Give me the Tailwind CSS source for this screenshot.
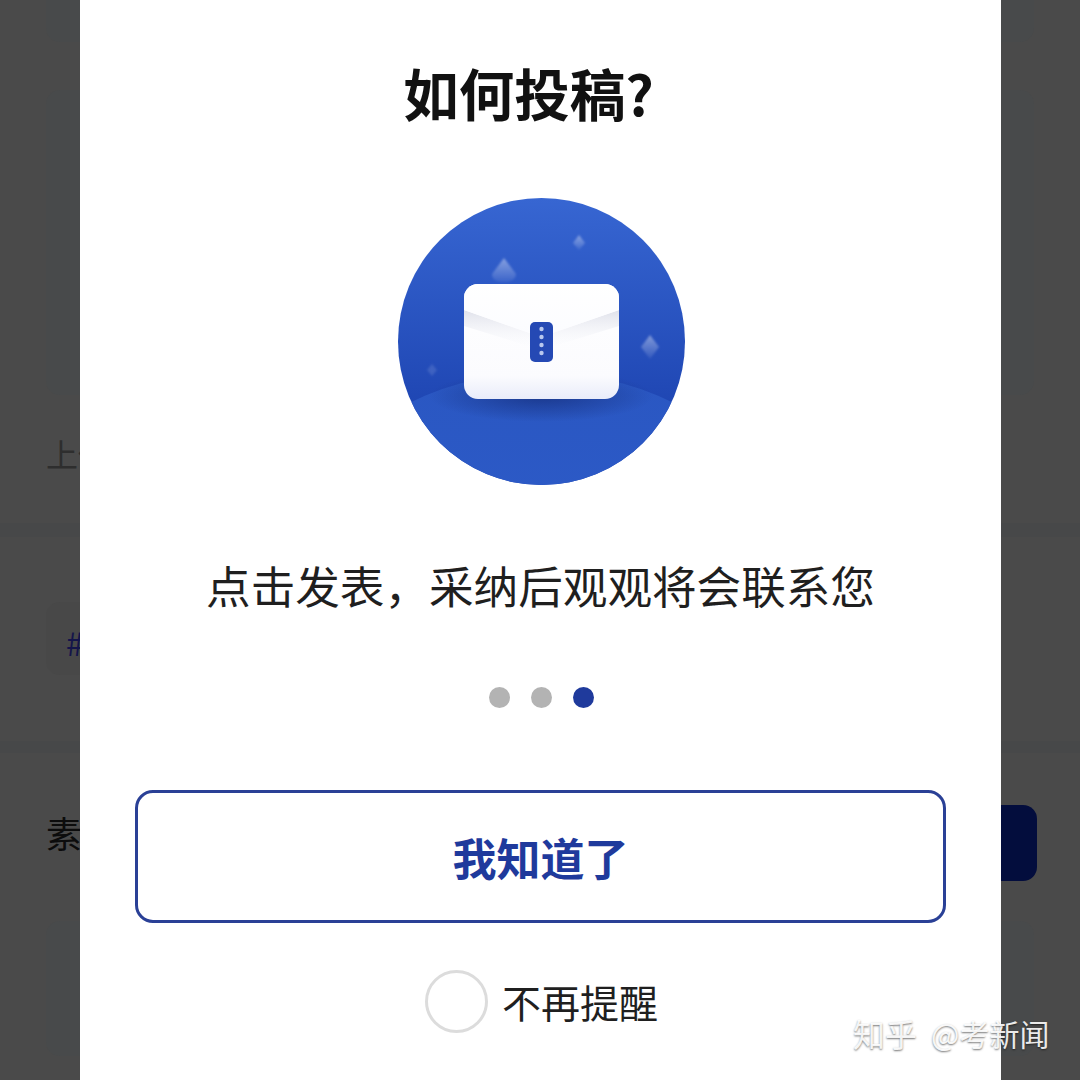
<!DOCTYPE html>
<html lang="zh">
<head>
<meta charset="utf-8">
<script src="https://cdn.jsdelivr.net/npm/@tailwindcss/browser@4"></script>
</head>
<body class="m-0">
<div class="relative w-[1080px] h-[1080px] overflow-hidden bg-[#4a4a4a] font-['Noto_Sans_CJK_SC','Noto_Sans',sans-serif]">
  <!-- dimmed page behind the dialog -->
  <div class="flex flex-col h-full">
    <div class="mx-[46px] h-[42px] rounded-b-[14px] bg-[#484a4b]"></div>
    <div class="mx-[46px] mt-[48px] h-[305px] rounded-[14px] bg-[#484a4b]"></div>
    <div class="ml-[46px] mt-[34px] h-[48px] text-[32px] leading-[48px] text-[#2e2e2e]">上传</div>
    <div class="mt-[46px] h-[14px] bg-[#474849]"></div>
    <div class="mt-[65px] ml-[46px] w-[120px] h-[73px] rounded-[14px] bg-[#484848] pl-[20px] text-[32px] leading-[80px] text-[#14144a]">#</div>
    <div class="mt-[66px] h-[12px] bg-[#474849]"></div>
    <div class="mt-[52px] flex items-center justify-between pl-[46px] pr-[43px] h-[76px]">
      <span class="text-[36px] text-[#0c0c0c] -translate-y-[11px]">素材</span>
      <div class="w-[140px] h-[76px] rounded-[14px] bg-[#030d3d]"></div>
    </div>
    <div class="mx-[46px] mt-[40px] h-[135px] rounded-[14px] bg-[#484a4b]"></div>
  </div>

  <!-- dialog -->
  <div class="absolute left-[80px] top-0 w-[921px] h-[1080px] bg-white flex flex-col items-center">
    <h1 class="mt-[52px] h-[80px] text-[55.5px] leading-[80px] font-bold text-[#111] -translate-x-[12px]">如何投稿?</h1>
    <svg class="mt-[66px] ml-[2px] w-[287px] h-[287px]" viewBox="0 0 287 287" fill="none">
      <defs>
        <linearGradient id="sky" x1="0" y1="0" x2="0" y2="1">
          <stop offset="0" stop-color="#3766d2"/>
          <stop offset="0.75" stop-color="#1e45b2"/>
        </linearGradient>
        <linearGradient id="hill" x1="0" y1="0" x2="0" y2="1">
          <stop offset="0" stop-color="#2a57c2"/>
          <stop offset="1" stop-color="#2e5ccb"/>
        </linearGradient>
        <linearGradient id="gem" x1="0" y1="0" x2="0" y2="1">
          <stop offset="0" stop-color="#fff" stop-opacity=".42"/>
          <stop offset="1" stop-color="#fff" stop-opacity=".06"/>
        </linearGradient>
        <linearGradient id="body" x1="0" y1="0" x2="0" y2="1">
          <stop offset="0" stop-color="#ffffff"/>
          <stop offset="0.8" stop-color="#fbfbfe"/>
          <stop offset="1" stop-color="#e9ecfa"/>
        </linearGradient>
        <linearGradient id="flap" x1="0" y1="0" x2="0" y2="1">
          <stop offset="0" stop-color="#ffffff"/>
          <stop offset="1" stop-color="#fbfcff"/>
        </linearGradient>
        <linearGradient id="fold" x1="0" y1="0" x2="0" y2="1">
          <stop offset="0" stop-color="#dfe1ea"/>
          <stop offset="1" stop-color="#fafbfe" stop-opacity="0"/>
        </linearGradient>
        <radialGradient id="shade">
          <stop offset="0" stop-color="#142c78" stop-opacity=".7"/>
          <stop offset="1" stop-color="#142c78" stop-opacity="0"/>
        </radialGradient>
        <filter id="soft" x="-30%" y="-30%" width="160%" height="160%"><feGaussianBlur stdDeviation="0.9"/></filter>
        <clipPath id="disc"><circle cx="143.5" cy="143.5" r="143.5"/></clipPath>
      </defs>
      <g clip-path="url(#disc)">
        <rect width="287" height="287" fill="url(#sky)"/>
        <ellipse cx="143.5" cy="310" rx="210" ry="135" fill="url(#hill)"/>
        <ellipse cx="143.5" cy="198" rx="112" ry="26" fill="url(#shade)"/>
      </g>
      <g filter="url(#soft)">
        <path d="M106 60 L118 76 Q118 84 106 84 Q94 84 94 76 Z" fill="url(#gem)"/>
        <path d="M181 37 L187 45 L181 52 L175 45 Z" fill="url(#gem)"/>
        <path d="M252 137 L261 149 L252 161 L243 149 Z" fill="url(#gem)"/>
        <path d="M34 166 L39 172 L34 178 L29 172 Z" fill="#fff" fill-opacity=".12"/>
      </g>
      <rect x="66" y="86" width="155" height="115" rx="14" fill="url(#body)"/>
      <path d="M66 112 L143 139 L221 112 L221 128 L143 152 L66 128 Z" fill="url(#fold)"/>
      <path d="M80 86 H207 A14 14 0 0 1 221 100 V112 L143 139 L66 112 V100 A14 14 0 0 1 80 86 Z" fill="url(#flap)"/>
      <rect x="132" y="124" width="23" height="40" rx="5" fill="#2549b4"/>
      <circle cx="143.5" cy="131" r="2.2" fill="#b9c8ee"/>
      <circle cx="143.5" cy="139" r="2.2" fill="#b9c8ee"/>
      <circle cx="143.5" cy="147" r="2.2" fill="#b9c8ee"/>
      <circle cx="143.5" cy="155" r="2.2" fill="#b9c8ee"/>
    </svg>
    <p class="mt-[68px] h-[64px] text-[44.6px] leading-[64px] text-[#1f1f1f] whitespace-nowrap">点击发表，采纳后观观将会联系您</p>
    <div class="mt-[70px] ml-[2px] flex gap-[21px]">
      <span class="w-[21px] h-[21px] rounded-full bg-[#b3b3b3]"></span>
      <span class="w-[21px] h-[21px] rounded-full bg-[#b3b3b3]"></span>
      <span class="w-[21px] h-[21px] rounded-full bg-[#1f3a9c]"></span>
    </div>
    <button class="mt-[82px] w-[811px] h-[133px] rounded-[18px] border-[3px] border-[#2a4096] bg-white text-[44px] font-bold text-[#1f3a9c]">我知道了</button>
    <label class="mt-[47px] ml-[2px] flex items-center gap-[14px]">
      <span class="w-[63px] h-[63px] rounded-full border-[3px] border-[#dcdcdc]"></span>
      <span class="text-[39px] leading-[63px] text-[#1f1f1f]">不再提醒</span>
    </label>
  </div>

  <!-- watermark -->
  <div class="absolute left-[853px] top-[1011px] flex items-center gap-[14px] whitespace-nowrap leading-[44px] text-white/90 [text-shadow:0_1px_2px_rgba(0,0,0,0.55)]">
    <span class="text-[32px]">知乎</span>
    <span class="text-[30px]">@考新闻</span>
  </div>
</div>
</body>
</html>
